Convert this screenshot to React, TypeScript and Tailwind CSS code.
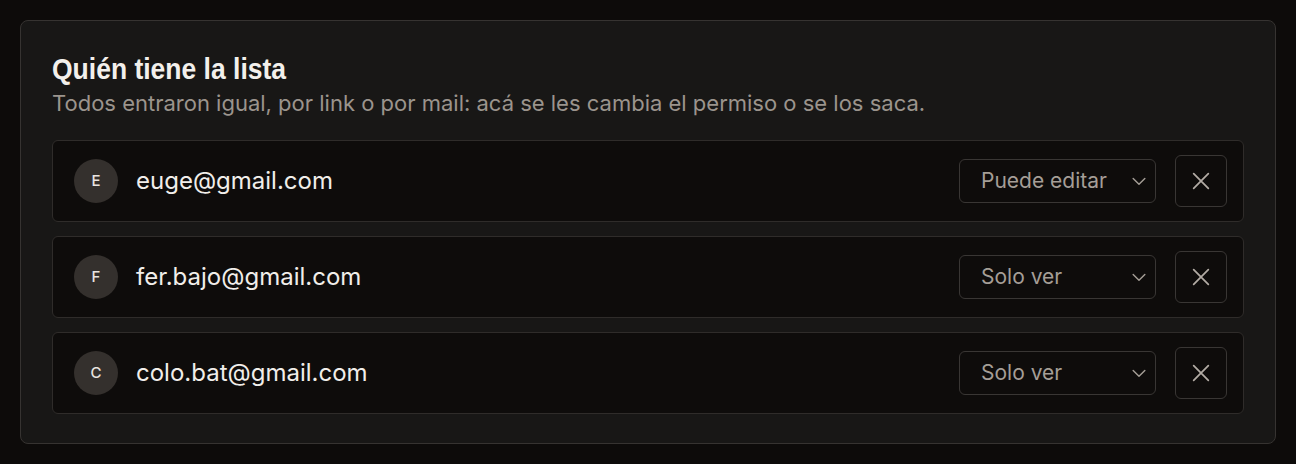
import React from 'react';

type Member = { email: string; role: string };

const members: Member[] = [
  { email: 'euge@gmail.com', role: 'Puede editar' },
  { email: 'fer.bajo@gmail.com', role: 'Solo ver' },
  { email: 'colo.bat@gmail.com', role: 'Solo ver' },
];

function Chevron() {
  return (
    <svg width="20" height="20" viewBox="0 0 24 24" fill="none" stroke="currentColor" strokeWidth="1.7" strokeLinecap="round" strokeLinejoin="round">
      <path d="M5 9l7 7 7-7" />
    </svg>
  );
}

function Cross() {
  return (
    <svg width="22" height="22" viewBox="0 0 24 24" fill="none" stroke="currentColor" strokeWidth="1.9" strokeLinecap="round">
      <path d="M4 4l16 16M20 4L4 20" />
    </svg>
  );
}

function MemberRow({ member }: { member: Member }) {
  return (
    <div className="flex h-[82px] items-center rounded-[6px] border border-[#2f2c2a] bg-[#0e0c0b] pl-[21px] pr-[16px]">
      <div className="flex h-[44px] w-[44px] items-center justify-center rounded-full bg-[#34302d] text-[15px] font-medium text-[#e9e5e0]">
        {member.email[0].toUpperCase()}
      </div>
      <span className="ml-[18px] text-[24px] text-[#f1eeea]">{member.email}</span>
      <div className="ml-auto flex items-center gap-[19px]">
        <div className="flex h-[44px] w-[197px] items-center justify-between rounded-[6px] border border-[#393634] pl-[21px] pr-[6px] text-[21px] text-[#a59e97]">
          <span>{member.role}</span>
          <span className="text-[#a59e97]"><Chevron /></span>
        </div>
        <button className="flex h-[52px] w-[52px] items-center justify-center rounded-[6px] border border-[#393634] text-[#b3aca5]">
          <Cross />
        </button>
      </div>
    </div>
  );
}

export default function App() {
  return (
    <div className="min-h-[464px] bg-[#0d0b0a] p-[20px] font-['Inter',sans-serif]">
      <div className="rounded-[8px] border border-[#363331] bg-[#181716] px-[31px] pt-[30px] pb-[29px]">
        <h2 className="font-['Liberation_Sans',sans-serif] text-[30px] leading-[36px] font-bold text-[#f3f0ec]">
          <span className="inline-block origin-left scale-x-[0.883]">Quién tiene la lista</span>
        </h2>
        <p className="mt-[1px] text-[22px] leading-[30px] text-[#9b948d]">
          Todos entraron igual, por link o por mail: acá se les cambia el permiso o se los saca.
        </p>
        <div className="mt-[22px] flex flex-col gap-[14px]">
          {members.map((m) => (
            <MemberRow key={m.email} member={m} />
          ))}
        </div>
      </div>
    </div>
  );
}
